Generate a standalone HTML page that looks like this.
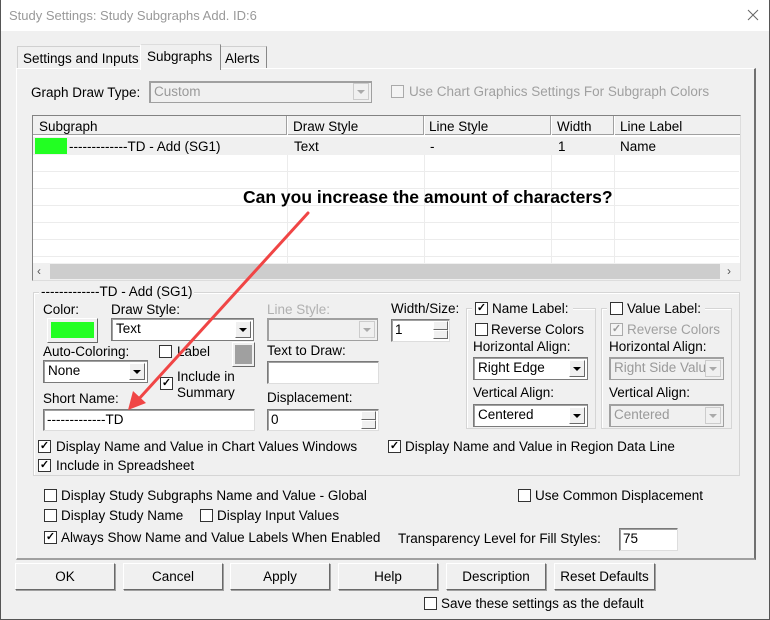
<!DOCTYPE html>
<html><head><meta charset="utf-8"><style>
*{box-sizing:border-box;margin:0;padding:0}
body{width:770px;height:620px;background:#f0f0f0;font:13.5px "Liberation Sans",sans-serif;color:#000;position:relative;overflow:hidden}
.a{position:absolute;white-space:nowrap}
.t{position:absolute;white-space:nowrap;line-height:15px}
.g{color:#a0a0a0}
.cb{position:absolute;width:13px;height:13px;background:#fff;border:1px solid #333;font-size:11px;line-height:11px;text-align:center;font-weight:bold}
.cb.d{border-color:#aaa;background:#f4f4f4;color:#999}
.ed{position:absolute;background:#fff;border:1px solid #7a7a7a;border-right-color:#ddd;border-bottom-color:#ddd;box-shadow:inset 1px 1px 0 #a0a0a0;padding:2px 3px;line-height:15px}
.cmb{position:absolute;background:#fff;border:1px solid #7a7a7a;box-shadow:inset 1px 1px 0 #a0a0a0;padding:2px 4px;line-height:15px}
.cmb.d{background:#f0f0f0;color:#999;border-color:#a0a0a0}
.ar{position:absolute;right:2px;top:2px;width:16px;height:17px;background:#f0f0f0;border:1px solid #fff;border-right-color:#696969;border-bottom-color:#696969}
.ar svg{position:absolute;left:3px;top:6px}
.btn{position:absolute;height:27px;background:#f0f0f0;border:1px solid #fff;border-right-color:#696969;border-bottom-color:#696969;box-shadow:1px 1px 0 #a0a0a0;text-align:center;line-height:25px}
.gb{position:absolute;border:1px solid #d5d5d5;box-shadow:inset 1px 1px 0 #fff}
.gl{position:absolute;background:#f0f0f0;padding:0 2px;line-height:15px}
.hl{position:absolute;height:1px;background:#ececec}
.vl{position:absolute;width:1px;background:#ececec}
</style></head><body>
<div class="a" style="left:0;top:0;width:770px;height:31px;background:#fff"></div>
<div class="a" style="left:0;top:0;width:1px;height:620px;background:#555"></div>
<div class="a" style="left:769px;top:0;width:1px;height:620px;background:#555"></div>
<div class="a" style="left:0;top:619px;width:770px;height:1px;background:#555"></div>
<div class="t" style="left:9px;top:8px;color:#999;font-size:13px">Study Settings: Study Subgraphs Add. ID:6</div>
<svg class="a" style="left:747px;top:9px" width="12" height="12"><path d="M1 1L11 11M11 1L1 11" stroke="#666" stroke-width="1"/></svg>

<div class="a" style="left:17px;top:46px;width:124px;height:23px;border:1px solid #d0d0d0;border-bottom:0;background:#f0f0f0"></div>
<div class="t" style="left:23px;top:51px">Settings and Inputs</div>
<div class="a" style="left:220px;top:46px;width:47px;height:23px;border:1px solid #d0d0d0;border-right-color:#888;border-bottom:0"></div>
<div class="t" style="left:225px;top:51px">Alerts</div>
<div class="a" style="left:16px;top:68px;width:740px;height:492px;border:1px solid #fff;border-right:2px solid #707070;border-bottom:2px solid #a0a0a0"></div>
<div class="a" style="left:140px;top:44px;width:81px;height:26px;border:1px solid #ddd;border-bottom:0;background:#f0f0f0;border-right-color:#888;border-left-color:#fff"></div>
<div class="t" style="left:147px;top:49px">Subgraphs</div>

<div class="t" style="left:31px;top:85px">Graph Draw Type:</div>
<div class="cmb d" style="left:149px;top:81px;width:223px;height:22px">Custom<div class="ar" style="border-color:#ccc;top:1px"><svg width="8" height="4"><path d="M0 0H8L4 4Z" fill="#aaa"/></svg></div></div>
<div class="cb d" style="left:391px;top:85px"></div>
<div class="t g" style="left:409px;top:84px">Use Chart Graphics Settings For Subgraph Colors</div>

<div class="a" style="left:32px;top:115px;width:709px;height:166px;background:#fff;border:1px solid #828282;border-right-color:#ddd;border-bottom-color:#ddd"></div>
<div class="a" style="left:33px;top:116px;width:707px;height:19px;background:#f0f0f0;border-bottom:1px solid #a0a0a0"></div>
<div class="a" style="left:286px;top:116px;width:1px;height:19px;background:#a0a0a0;box-shadow:1px 0 0 #fff"></div>
<div class="a" style="left:423px;top:116px;width:1px;height:19px;background:#a0a0a0;box-shadow:1px 0 0 #fff"></div>
<div class="a" style="left:550px;top:116px;width:1px;height:19px;background:#a0a0a0;box-shadow:1px 0 0 #fff"></div>
<div class="a" style="left:613px;top:116px;width:1px;height:19px;background:#a0a0a0;box-shadow:1px 0 0 #fff"></div>
<div class="t" style="left:39px;top:119px">Subgraph</div>
<div class="t" style="left:293px;top:119px">Draw Style</div>
<div class="t" style="left:429px;top:119px">Line Style</div>
<div class="t" style="left:557px;top:119px">Width</div>
<div class="t" style="left:620px;top:119px">Line Label</div>
<div class="a" style="left:33px;top:137px;width:707px;height:18px;background:#f0f0f0"></div>
<div class="a" style="left:35px;top:138px;width:32px;height:16px;background:#22ff22"></div>
<div class="t" style="left:69px;top:139px">-------------TD - Add (SG1)</div>
<div class="t" style="left:294px;top:139px">Text</div>
<div class="t" style="left:430px;top:139px">-</div>
<div class="t" style="left:558px;top:139px">1</div>
<div class="t" style="left:620px;top:139px">Name</div>
<div class="vl" style="left:287px;top:155px;height:108px"></div>
<div class="vl" style="left:424px;top:155px;height:108px"></div>
<div class="vl" style="left:551px;top:155px;height:108px"></div>
<div class="vl" style="left:614px;top:155px;height:108px"></div>
<div class="hl" style="left:33px;width:706px;top:171px"></div>
<div class="hl" style="left:33px;width:706px;top:188px"></div>
<div class="hl" style="left:33px;width:706px;top:205px"></div>
<div class="hl" style="left:33px;width:706px;top:222px"></div>
<div class="hl" style="left:33px;width:706px;top:239px"></div>
<div class="hl" style="left:33px;width:706px;top:256px"></div>
<div class="a" style="left:33px;top:263px;width:707px;height:17px;background:#f0f0f0"></div>
<div class="a" style="left:50px;top:264px;width:670px;height:15px;background:#cdcdcd"></div>
<div class="t" style="left:37px;top:264px;color:#555;font-size:12px">&lsaquo;</div>
<div class="t" style="left:727px;top:264px;color:#555;font-size:12px">&rsaquo;</div>
<div class="t" style="left:243px;top:187px;font-weight:bold;font-size:17.5px;line-height:20px">Can you increase the amount of characters?</div>

<div class="gb" style="left:33px;top:292px;width:707px;height:184px"></div>
<div class="gl" style="left:39px;top:284px">-------------TD - Add (SG1)</div>
<div class="t" style="left:43px;top:302px">Color:</div>
<div class="btn" style="left:47px;top:318px;width:51px;height:25px;box-shadow:none"><div class="a" style="left:3px;top:3px;width:43px;height:16px;background:#22ff22"></div></div>
<div class="t" style="left:111px;top:302px">Draw Style:</div>
<div class="cmb" style="left:111px;top:318px;width:143px;height:23px">Text<div class="ar"><svg width="8" height="4"><path d="M0 0H8L4 4Z" fill="#000"/></svg></div></div>
<div class="t" style="left:267px;top:302px;color:#b0b0b0">Line Style:</div>
<div class="cmb d" style="left:267px;top:318px;width:111px;height:23px"><div class="ar" style="border-color:#ccc"><svg width="8" height="4"><path d="M0 0H8L4 4Z" fill="#aaa"/></svg></div></div>
<div class="t" style="left:391px;top:301px">Width/Size:</div>
<div class="ed" style="left:391px;top:319px;width:59px;height:23px">1</div>
<div class="btn" style="left:433px;top:321px;width:15px;height:9px;box-shadow:none"></div>
<div class="btn" style="left:433px;top:330px;width:15px;height:9px;box-shadow:none"></div>

<div class="t" style="left:43px;top:344px">Auto-Coloring:</div>
<div class="cmb" style="left:43px;top:360px;width:105px;height:23px">None<div class="ar"><svg width="8" height="4"><path d="M0 0H8L4 4Z" fill="#000"/></svg></div></div>
<div class="cb" style="left:159px;top:345px"></div>
<div class="t" style="left:177px;top:344px">Label</div>
<div class="btn" style="left:232px;top:342px;width:23px;height:25px;box-shadow:none"><div class="a" style="left:2px;top:2px;width:17px;height:19px;background:#a0a0a0"></div></div>
<div class="t" style="left:267px;top:343px">Text to Draw:</div>
<div class="ed" style="left:267px;top:361px;width:112px;height:23px"></div>
<div class="cb" style="left:160px;top:377px">✓</div>
<div class="t" style="left:177px;top:369px">Include in</div>
<div class="t" style="left:177px;top:385px">Summary</div>

<div class="t" style="left:43px;top:391px">Short Name:</div>
<div class="ed" style="left:43px;top:409px;width:212px;height:22px">-------------TD</div>
<div class="t" style="left:267px;top:390px">Displacement:</div>
<div class="ed" style="left:267px;top:409px;width:112px;height:22px">0</div>
<div class="btn" style="left:361px;top:411px;width:15px;height:9px;box-shadow:none"></div>
<div class="btn" style="left:361px;top:420px;width:15px;height:9px;box-shadow:none"></div>

<div class="gb" style="left:466px;top:308px;width:130px;height:121px"></div>
<div class="gl" style="left:472px;top:301px;padding-right:4px"><span style="display:inline-block;width:18px"></span>Name Label:</div>
<div class="cb" style="left:475px;top:302px">✓</div>
<div class="cb" style="left:475px;top:323px"></div>
<div class="t" style="left:491px;top:322px">Reverse Colors</div>
<div class="t" style="left:473px;top:339px">Horizontal Align:</div>
<div class="cmb" style="left:473px;top:357px;width:115px;height:23px">Right Edge<div class="ar"><svg width="8" height="4"><path d="M0 0H8L4 4Z" fill="#000"/></svg></div></div>
<div class="t" style="left:473px;top:385px">Vertical Align:</div>
<div class="cmb" style="left:473px;top:404px;width:115px;height:23px">Centered<div class="ar"><svg width="8" height="4"><path d="M0 0H8L4 4Z" fill="#000"/></svg></div></div>
<div class="gb" style="left:601px;top:308px;width:131px;height:121px"></div>
<div class="gl" style="left:607px;top:301px;padding-right:4px"><span style="display:inline-block;width:18px"></span>Value Label:</div>
<div class="cb" style="left:610px;top:302px"></div>
<div class="cb d" style="left:610px;top:323px">✓</div>
<div class="t g" style="left:627px;top:322px">Reverse Colors</div>
<div class="t" style="left:609px;top:339px">Horizontal Align:</div>
<div class="cmb d" style="left:609px;top:357px;width:115px;height:23px;overflow:hidden">Right Side Valu<div class="ar" style="border-color:#ccc"><svg width="8" height="4"><path d="M0 0H8L4 4Z" fill="#aaa"/></svg></div></div>
<div class="t" style="left:609px;top:385px">Vertical Align:</div>
<div class="cmb d" style="left:609px;top:404px;width:115px;height:23px">Centered<div class="ar" style="border-color:#ccc"><svg width="8" height="4"><path d="M0 0H8L4 4Z" fill="#aaa"/></svg></div></div>

<div class="cb" style="left:38px;top:440px">✓</div>
<div class="t" style="left:56px;top:439px">Display Name and Value in Chart Values Windows</div>
<div class="cb" style="left:388px;top:440px">✓</div>
<div class="t" style="left:405px;top:439px">Display Name and Value in Region Data Line</div>
<div class="cb" style="left:38px;top:459px">✓</div>
<div class="t" style="left:56px;top:458px">Include in Spreadsheet</div>

<div class="cb" style="left:44px;top:489px"></div>
<div class="t" style="left:61px;top:488px">Display Study Subgraphs Name and Value - Global</div>
<div class="cb" style="left:518px;top:489px"></div>
<div class="t" style="left:535px;top:488px">Use Common Displacement</div>
<div class="cb" style="left:44px;top:509px"></div>
<div class="t" style="left:61px;top:508px">Display Study Name</div>
<div class="cb" style="left:200px;top:509px"></div>
<div class="t" style="left:217px;top:508px">Display Input Values</div>
<div class="cb" style="left:44px;top:531px">✓</div>
<div class="t" style="left:61px;top:530px">Always Show Name and Value Labels When Enabled</div>
<div class="t" style="left:398px;top:531px">Transparency Level for Fill Styles:</div>
<div class="ed" style="left:619px;top:528px;width:59px;height:23px">75</div>

<div class="btn" style="left:15px;top:563px;width:100px">OK</div>
<div class="btn" style="left:123px;top:563px;width:100px">Cancel</div>
<div class="btn" style="left:230px;top:563px;width:100px">Apply</div>
<div class="btn" style="left:338px;top:563px;width:100px">Help</div>
<div class="btn" style="left:446px;top:563px;width:100px">Description</div>
<div class="btn" style="left:554px;top:563px;width:101px">Reset Defaults</div>
<div class="cb" style="left:424px;top:597px"></div>
<div class="t" style="left:441px;top:596px">Save these settings as the default</div>

<svg class="a" style="left:0;top:0" width="770" height="620"><path d="M308 213L137 401" stroke="#f04545" stroke-width="3" fill="none" stroke-linecap="round"/><path d="M128 410L133 391L146 403Z" fill="#f04545"/></svg>
</body></html>
